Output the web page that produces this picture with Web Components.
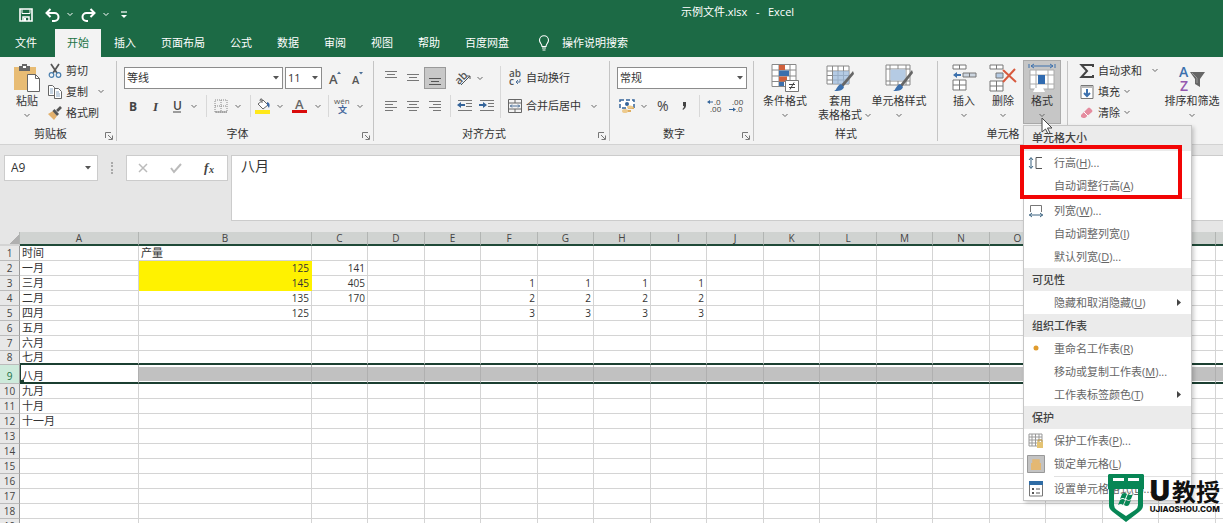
<!DOCTYPE html>
<html lang="zh-CN">
<head>
<meta charset="utf-8">
<title>示例文件.xlsx - Excel</title>
<style>
html, body { margin: 0; height: 100%; }
body { overflow: hidden; font: 11px/14px "Open Sans", "Noto Sans CJK SC", sans-serif; color: #333; background: #e6e6e6; }
</style>
</head>
<body>
<excel-app></excel-app>
<script>
const ICONS = {
  save: [14, 14, '<path d="M1 1h12v12H1z" fill="none" stroke="#fff" stroke-width="1.6"/><path d="M3 1.500v4h8v-4" fill="none" stroke="#fff"/><path d="M4 13V9h6v4" fill="none" stroke="#fff" stroke-width="1.500"/><path d="M5 10h2v3H5z" fill="#fff"/>'],
  undo: [16, 14, '<path d="M5.500 1L1.500 5l4 4M2 5h7.500a4 4 0 0 1 0 8H7" fill="none" stroke="#fff" stroke-width="2"/>'],
  redo: [16, 14, '<path d="M10.500 1l4 4-4 4M14 5H6.500a4 4 0 0 0 0 8H8" fill="none" stroke="#fff" stroke-width="2"/>'],
  chevw: [6, 5, '<path d="M.5 1L3 3.500 5.500 1" fill="none" stroke="#fff"/>'],
  custom: [6, 8, '<path d="M0 1h6" stroke="#fff" stroke-width="1.200"/><path d="M0 4h6L3 7z" fill="#fff"/>'],
  bulb: [12, 16, '<path d="M4 11.500C4 9 1.500 8 1.500 5.300a4.500 4.500 0 0 1 9 0C10.500 8 8 9 8 11.500zM4 13h4M4.500 15h3" fill="none" stroke="#fff" stroke-width="1.100"/>'],
  chev: [6, 5, '<path d="M.5 1L3 3.500 5.500 1" fill="none" stroke="#666"/>'],
  tri: [6, 4, '<path d="M0 0h6L3 3.500z" fill="#555"/>'],
  launch: [8, 8, '<path d="M.5 6V.5H6M3 3l4 4M7.500 3.500v4h-4" fill="none" stroke="#777"/>'],
  paste: [28, 28, '<path d="M1 3h22v23H1z" fill="#e8bc74"/><path d="M6 2h11v5H6z" fill="#666"/><path d="M9 0h5v4H9z" fill="#666"/><path d="M10 2h3v2h-3z" fill="#fff"/><path d="M14.500 10.500h8l4 4v13h-12z" fill="#fff" stroke="#666"/><path d="M22.500 10.500v4h4" fill="none" stroke="#666"/>'],
  cut: [14, 14, '<path d="M3 0l6 9M11 0L5 9" stroke="#555" stroke-width="1.700"/><circle cx="3.500" cy="11" r="2.300" fill="none" stroke="#4a7fae" stroke-width="1.200"/><circle cx="10.500" cy="11" r="2.300" fill="none" stroke="#4a7fae" stroke-width="1.200"/>'],
  copy: [14, 14, '<path d="M.5.5h4l2 2v8h-6z" fill="#fff" stroke="#666"/><path d="M6.500 3.500h4l3 3v7h-7z" fill="#fff" stroke="#666"/><path d="M2 4h3M2 6h3M2 8h3M8 7h3M8 9h4M8 11h4" stroke="#6f92b5" stroke-width=".8"/>'],
  brush: [14, 14, '<path d="M0 8l5-3 4 5-3 4z" fill="#e3b16d"/><path d="M4.500 5l2-2L11 8l-2 2z" fill="#555"/><path d="M9 5l4-4" stroke="#555" stroke-width="2.600"/>'],
  bold: [12, 12, '<text x="2" y="11" font-size="12" font-weight="700" fill="#444">B</text>'],
  italic: [12, 12, '<text x="4" y="11" font-size="13" font-weight="600" font-style="italic" font-family="Liberation Serif" fill="#444">I</text>'],
  under: [12, 14, '<text x="2" y="11" font-size="12" font-weight="600" fill="#444">U</text><path d="M2 13h8" stroke="#444"/>'],
  grow: [14, 14, '<text x="1" y="13" font-size="13" font-weight="600" fill="#555">A</text><path d="M9 3h4l-2-2.500z" fill="#4a6f98"/>'],
  shrink: [14, 14, '<text x="1" y="13" font-size="11" font-weight="600" fill="#555">A</text><path d="M8 1h4l-2 2.500z" fill="#4a6f98"/>'],
  border: [14, 14, '<path d="M1 1h12v12H1zM7 1v12M1 7h12" fill="none" stroke="#888" stroke-dasharray="1 1"/><path d="M1 13h12" stroke="#888"/>'],
  fill: [16, 16, '<path d="M0 12h15v4H0z" fill="#ffe81a"/><path d="M3 6l5-4 5 5-5 4z" fill="#fff" stroke="#666"/><path d="M7 5V1q-2-1-2 2" fill="none" stroke="#666"/><path d="M12 4q4 1 2 6l-2-3z" fill="#3c68a5"/>'],
  color: [16, 16, '<text x="3" y="11" font-size="13" font-weight="600" fill="#666">A</text><path d="M0 12h15v3H0z" fill="#d90b0b"/>'],
  wen: [16, 16, '<text x="0" y="6" font-size="8" fill="#555">wén</text><text x="4" y="15" font-size="9" font-weight="700" fill="#44669b">文</text>'],
  vtop: [14, 14, '<path d="M1 .5h12M3 3.500h8M1 6.500h12" stroke="#777"/>'],
  vmid: [14, 14, '<path d="M1 3.500h12M3 6.500h8M1 9.500h12" stroke="#777"/>'],
  vbot: [14, 14, '<path d="M1 7.500h12M3 10.500h8M1 13.500h12" stroke="#555"/>'],
  left: [14, 14, '<path d="M1 2.500h12M1 5.500h8M1 8.500h12M1 11.500h8" stroke="#777"/>'],
  center: [14, 14, '<path d="M1 2.500h12M3 5.500h8M1 8.500h12M3 11.500h8" stroke="#777"/>'],
  right: [14, 14, '<path d="M1 2.500h12M5 5.500h8M1 8.500h12M5 11.500h8" stroke="#777"/>'],
  orient: [16, 16, '<text x="0" y="12" font-size="11" font-weight="600" fill="#555" transform="rotate(-45 6 9)">ab</text><path d="M6 15L15 6M12 6h3v3" fill="none" stroke="#555"/>'],
  outdent: [16, 14, '<path d="M1 1.500h14M9 4.500h6M9 7.500h6M1 11.500h14" stroke="#777"/><path d="M0 6l4-3v2h4v2H4v2z" fill="#34649a"/>'],
  indent: [16, 14, '<path d="M1 1.500h14M9 4.500h6M9 7.500h6M1 11.500h14" stroke="#777"/><path d="M8 6L4 3v2H0v2h4v2z" fill="#34649a"/>'],
  wrap: [14, 16, '<text x="1" y="7" font-size="10" font-weight="600" fill="#555">ab</text><text x="1" y="15" font-size="10" font-weight="600" fill="#555">c</text><path d="M12 9v3H8M10 10l-2 2 2 2" fill="none" stroke="#4a6f98"/>'],
  merge: [14, 14, '<path d="M.5.5h13v13H.5zM.5 4h13M.5 10h13M7 .5V4M7 10v3.500" fill="none" stroke="#666"/><path d="M2 7h10M4 5.500L2.500 7 4 8.500M10 5.500L11.500 7 10 8.500" fill="none" stroke="#4a6f98"/>'],
  money: [16, 16, '<path d="M1 2h14v8H1z" fill="#fff" stroke="#34649a" stroke-width="1.500" stroke-dasharray="4 2"/><circle cx="8" cy="6" r="2" fill="#34649a"/><path d="M9 9h6v2H9zM6 12h6v2H6z" fill="#dfae62"/><ellipse cx="11" cy="9" rx="3" ry="1.500" fill="#edca8d"/><ellipse cx="6" cy="13" rx="3" ry="2" fill="#edca8d"/>'],
  percent: [14, 14, '<text x="1" y="12" font-size="14" fill="#444">%</text>'],
  comma: [8, 14, '<path d="M3 3h3v4q0 2-3 4l-.5-1Q4 9 4 7H3z" fill="#444"/>'],
  incdec: [14, 14, '<text x="7" y="6" font-size="8" fill="#444">.0</text><text x="3" y="13" font-size="8" fill="#444">.00</text><path d="M0 3l3-2v1.500h3v1H3V5z" fill="#34649a"/>'],
  decdec: [14, 14, '<text x="3" y="6" font-size="8" fill="#444">.00</text><text x="7" y="13" font-size="8" fill="#444">.0</text><path d="M7 10.500L4 8.500V10H0v1h4v1.500z" fill="#34649a"/>'],
  cond: [28, 28, '<path d="M1 .5h24v22H1zM1 6h24M1 12h24M1 17.500h24M8 .5v22M19 .5v22" fill="#fff" stroke="#888"/><path d="M8 1h6v5H8zM8 12.500h8v5H8z" fill="#d0603c"/><path d="M8 6.500h10V12H8zM8 18h5v4H8z" fill="#3c70ad"/><path d="M14.500 16.500h13v11h-13z" fill="#fff" stroke="#777"/><path d="M18 20.500h6M18 23.500h6M23 18.500l-4 7" stroke="#444"/>'],
  tblfmt: [28, 28, '<path d="M1 2h22v18H1zM1 7h22M1 11.500h22M1 16h22M6.500 2v18M12 2v18M17.500 2v18" fill="#fff" stroke="#888"/><path d="M7 7h16v13H7z" fill="#9cbadb" opacity=".75"/><path d="M27 7L15 21l2 2L28 10z" fill="#666"/><path d="M15 20l3 3c-1 4-6 4-10 4 3-1 3-6 7-7z" fill="#3c70ad"/>'],
  cellfmt: [28, 28, '<path d="M1 1h24v20H1zM1 5h24M1 17h24M5 1v20M21 1v20M13 1v4M13 17v4" fill="#fff" stroke="#888"/><path d="M5.500 5.500h15v11h-15z" fill="#b5cbe4"/><path d="M27 6L15 21l2 2L28 9z" fill="#666"/><path d="M15 20l3 3c-1 4-6 4-10 4 3-1 3-6 7-7z" fill="#3c70ad"/>'],
  insert: [28, 28, '<path d="M3 1h13v4H3zM9.500 1v4M3 16h13v10H3zM3 21h13M9.500 16v10" fill="#fff" stroke="#777"/><path d="M13 9h13v4H13z" fill="#ccd5df" stroke="#777"/><path d="M19.500 9v4" stroke="#777"/><path d="M3 11l4-3v2h4v2H7v2z" fill="#3c70ad"/>'],
  del: [28, 28, '<path d="M1 1h13v4H1zM7.500 1v4M1 17h13v10H1zM1 22h13M7.500 17v10" fill="#fff" stroke="#777"/><path d="M7 9h7v5H7z" fill="#b5cbe4" stroke="#777"/><path d="M14 6l13 12M26 5L14 18" stroke="#d85a3e" stroke-width="2"/>'],
  format: [28, 28, '<path d="M3 2h22M6 0L3 2l3 2M22 0l3 2-3 2M1 0v4M27 0v4" fill="none" stroke="#3c70ad"/><path d="M2 6h24v19H2zM2 11h24M2 20h24M8 6v19M20 6v19" fill="#fff" stroke="#aaa"/><path d="M10 11h7v9h-7z" fill="#316bb0"/><path d="M5 28l2-4 8 0 2 4" fill="#fff"/>'],
  sum: [14, 14, '<path d="M13 3V1H1.500L7 7l-5.500 6H13v-2" fill="none" stroke="#444" stroke-width="2"/>'],
  down: [14, 14, '<path d="M1 .5h12v13H1z" fill="#fff" stroke="#777"/><path d="M1 1h12v2H1z" fill="#bbb"/><path d="M7 4v7M4 8l3 3 3-3" fill="none" stroke="#3c70ad" stroke-width="2"/>'],
  erase: [14, 14, '<path d="M1 9l7-7q1-1 2 0l2 2q1 1 0 2l-7 6H3L1 11z" fill="#e58c9f"/><path d="M4 6l4 4" stroke="#fff"/>'],
  sort: [28, 28, '<text x="1" y="13" font-size="14" font-weight="600" fill="#3c70ad">A</text><text x="2" y="27" font-size="14" font-weight="600" fill="#9458ae">Z</text><path d="M12 8h15l-5 7v8l-5-3v-5z" fill="#666"/><path d="M14 9l5 5v5" fill="none" stroke="#999"/>'],
  x: [12, 12, '<path d="M2 2l8 8M10 2l-8 8" stroke="#bbb" stroke-width="1.500"/>'],
  check: [14, 12, '<path d="M2 6l3 4 7-8" fill="none" stroke="#bbb" stroke-width="2"/>'],
  fx: [14, 14, '<text x="1" y="11" font-family="Liberation Serif" font-style="italic" font-weight="700" font-size="13" fill="#444">f</text><text x="6" y="12" font-family="Liberation Serif" font-style="italic" font-weight="700" font-size="10" fill="#444">x</text>'],
  rowh: [16, 14, '<path d="M3 2v10M1 4l2-2.500L5 4M1 10l2 2.500L5 10" fill="none" stroke="#3b6380"/><path d="M14 1.500H8v11h6" fill="none" stroke="#555"/>'],
  colw: [16, 14, '<path d="M2.500 8V1.500h11V8" fill="none" stroke="#777"/><path d="M1 11h14M4 9l-2.500 2L4 13M12 9l2.500 2-2.500 2" fill="none" stroke="#3b6380"/>'],
  dot: [16, 14, '<circle cx="8" cy="6" r="2.500" fill="#e09b2d"/>'],
  protect: [16, 16, '<path d="M1 1h13v12H1zM1 4h13M1 7h13M1 10h13M4 1v12M7.500 1v12M11 1v12" fill="#fff" stroke="#999"/><path d="M9 9h6v6H9z" fill="#e4c373"/><path d="M10 9V7h4v2" fill="none" stroke="#c8a049"/>'],
  lock: [18, 18, '<path d="M.5.5h17v17H.5z" fill="#c3c3c3" stroke="#999"/><path d="M4 8h10v7H4z" fill="#e4b873"/><path d="M6 8V5h6v3" fill="#e4b873" stroke="#e4b873" stroke-width="1.500"/>'],
  dialog: [14, 16, '<path d="M.5 1h13v14H.5z" fill="#fff" stroke="#777"/><path d="M0 0h14v4H0z" fill="#2f6ca5"/><path d="M3 7h2v2H3zM3 11h2v2H3z" fill="#555"/><path d="M7 8h4M7 12h4" stroke="#555"/>'],
  sub: [5, 7, '<path d="M0 0l4 3.500L0 7z" fill="#444"/>'],
  cursor: [12, 18, '<path d="M1 1v14l3.500-3 2.500 5 2-1-2.500-5H11z" fill="#fff" stroke="#444"/>'],
  shield: [36, 48, '<path fill-rule="evenodd" d="M1 0h34l1 1v14h-1v17q0 3-4 6L18 48 5 38q-4-3-4-6V15H0V1zM6 15v16q0 3 3 5l9 6 9-6q3-2 3-5V15z" fill="#078655"/><path d="M5 4h11v3H5zM20 4h11v3H20z" fill="#fff"/><path d="M14 20q3-2 5 0l-2 5q-2-2-5 0zM20 20q3 2 5 0l-2 5q-2 2-5 0zM12 26q3-2 5 0l-2 5q-2-2-5 0zM18 26q3 2 5 0l-2 5q-2 2-5 0z" fill="#078655"/>']
};

const define = (name, html, setup) => {
  const template = document.createElement('template');
  template.innerHTML = html;
  customElements.define(name, class extends HTMLElement {
    constructor() {
      super();
      this.attachShadow({ mode: 'open' }).append(template.content.cloneNode(true));
    }
    connectedCallback() { if (setup) setup(this, this.shadowRoot); }
  });
};

define('ui-icon', `<style>:host{display:inline-flex;flex:none}svg{display:block;overflow:visible}</style>`, (el, root) => {
  const [w, h, body] = ICONS[el.getAttribute('name')];
  root.innerHTML += `<svg width="${w}" height="${h}" viewBox="0 0 ${w} ${h}" aria-hidden="true">${body}</svg>`;
});

/* Button with an icon only. */
define('tool-button', `<style>
:host{display:block;flex:none;height:22px}
button{all:unset;box-sizing:border-box;display:flex;width:100%;height:100%;align-items:center;justify-content:center}
:host([active]) button{background:#c8c8c8;border:1px solid #999}
</style><button type="button"></button>`, (el, root) => {
  const b = root.querySelector('button');
  b.setAttribute('aria-label', el.title || el.getAttribute('icon'));
  b.innerHTML = `<ui-icon name="${el.getAttribute('icon')}"></ui-icon>`;
});

/* One-line button with an icon, a label and an optional arrow. */
define('label-button', `<style>
:host{display:block;height:21px}
button{all:unset;display:flex;height:100%;align-items:center;gap:4px;white-space:nowrap}
.ic{display:flex;width:14px;justify-content:center}
.arrow{display:none}
:host([drop]) .arrow{display:block}
:host([drop=far]) .arrow{margin-left:6px}
</style><button type="button"><span class="ic"></span><slot></slot><ui-icon class="arrow" name="chev"></ui-icon></button>`, (el, root) => {
  root.querySelector('.ic').innerHTML = `<ui-icon name="${el.getAttribute('icon')}"></ui-icon>`;
});

/* Tall button: picture on top, label under it. */
define('large-button', `<style>
:host{display:block;flex:none;height:64px}
button{all:unset;box-sizing:border-box;display:flex;flex-direction:column;align-items:center;width:100%;height:100%;padding-top:4px;white-space:nowrap;text-align:center}
.ic{height:30px}
.arrow{display:flex;height:14px;align-items:center}
:host([inline-arrow]) .arrow{display:none}
:host([active]) button{background:#c6c6c6;outline:1px solid #aaa;outline-offset:-1px}
</style><button type="button"><span class="ic"></span><span><slot></slot></span><span class="arrow"><ui-icon name="chev"></ui-icon></span></button>`, (el, root) => {
  root.querySelector('.ic').innerHTML = `<ui-icon name="${el.getAttribute('icon')}"></ui-icon>`;
});

define('combo-box', `<style>
:host{display:block;position:relative;height:22px}
select{appearance:none;box-sizing:border-box;width:100%;height:100%;margin:0;padding:0 2px;border:1px solid #8c8c8c;border-radius:0;background:#fff;color:#333;font:inherit}
ui-icon{position:absolute;right:4px;top:9px;pointer-events:none}
</style><select></select><ui-icon name="tri"></ui-icon>`, (el, root) => {
  const s = root.querySelector('select');
  s.setAttribute('aria-label', el.title);
  s.innerHTML = `<option>${el.getAttribute('value')}</option>`;
});

define('ribbon-group', `<style>
:host{display:grid;grid-template-rows:64px 20px;box-sizing:border-box;flex:none;padding-top:3px;position:relative;background:linear-gradient(#c4c4c4,#c4c4c4) right 4px/1px 80px no-repeat}
:host([last]){flex:1;background:none}
.body{display:flex;min-width:0}
.foot{display:grid;grid-template-columns:1fr;align-items:center;text-align:center}
:host([launcher]) .foot{grid-template-columns:1fr 16px}
button{all:unset;display:none;justify-self:center;margin-top:4px}
:host([launcher]) button{display:block}
</style><div class="body"><slot></slot></div><div class="foot"><span class="name"></span><button type="button" aria-label="更多"><ui-icon name="launch"></ui-icon></button></div>`, (el, root) => {
  root.querySelector('.name').textContent = el.getAttribute('label') || '';
});

define('title-bar', `<style>
:host{display:flex;height:29px;color:#fff}
.quick{display:flex;align-items:center;box-sizing:border-box;width:252px;padding-left:16px}
h1{flex:1;margin:0;padding-top:5px;font:inherit;text-align:center;white-space:pre}
</style><div class="quick">
<tool-button icon="save" title="保存" style="width:20px"></tool-button><tool-button icon="undo" title="撤销" style="width:34px"></tool-button><tool-button icon="chevw" title="撤销列表" style="width:0"></tool-button><tool-button icon="redo" title="恢复" style="width:36px"></tool-button><tool-button icon="chevw" title="恢复列表" style="width:0"></tool-button><tool-button icon="custom" title="自定义" style="width:36px"></tool-button>
</div><h1>示例文件.xlsx   -   Excel</h1>`);

define('ribbon-tabs', `<style>
:host{display:block}
nav{display:flex;height:28px;gap:1px;padding-left:3px}
a{display:flex;align-items:center;padding:0 12px;color:#fff;text-decoration:none;white-space:nowrap}
a:first-child{margin-right:5px}
a[aria-current]{background:#f3f3f3;color:#217346}
.tell{gap:12px;padding:0 16px}
</style><nav>
<a href="#file">文件</a><a href="#home" aria-current="page">开始</a><a href="#insert">插入</a><a href="#layout">页面布局</a><a href="#formula">公式</a><a href="#data">数据</a><a href="#review">审阅</a><a href="#view">视图</a><a href="#help">帮助</a><a href="#pan">百度网盘</a><a href="#tell" class="tell"><ui-icon name="bulb"></ui-icon>操作说明搜索</a></nav>`);

define('menu-item', `<style>
:host{display:block}
button{all:unset;box-sizing:border-box;display:grid;grid-template-columns:24px 1fr 14px;align-items:center;width:100%;height:23px;color:#666;white-space:nowrap}
.label{padding-left:6px}
.ic{display:flex;justify-content:center}
.arrow{visibility:hidden}
:host([submenu]) .arrow{visibility:visible}
</style><button type="button" role="menuitem"><span class="ic"></span><span class="label"><slot></slot></span><ui-icon class="arrow" name="sub"></ui-icon></button>`, (el, root) => {
  const name = el.getAttribute('icon');
  if (name) root.querySelector('.ic').innerHTML = `<ui-icon name="${name}"></ui-icon>`;
});

define('format-menu', `<style>
:host{display:block;box-sizing:border-box;width:169px;border:1px solid #c6c6c6;background:#fff;box-shadow:2px 2px 4px #0003}
h2{margin:0;padding-left:8px;background:#ebebeb;font:inherit;font-weight:500;line-height:23px;color:#444}
h2:first-child{padding-bottom:2px}
hr{margin:0 0 0 30px;height:1px;border:0;border-bottom:1px solid #e1e1e1}
.highlight{position:absolute;left:-4px;top:19px;width:154px;height:46px;border:4px solid #f20505;pointer-events:none}
</style><div role="menu" aria-label="格式">
<h2>单元格大小</h2>
<menu-item icon="rowh">行高(<u>H</u>)...</menu-item>
<menu-item>自动调整行高(<u>A</u>)</menu-item>
<hr>
<menu-item icon="colw">列宽(<u>W</u>)...</menu-item>
<menu-item>自动调整列宽(<u>I</u>)</menu-item>
<menu-item>默认列宽(<u>D</u>)...</menu-item>
<h2>可见性</h2>
<menu-item submenu>隐藏和取消隐藏(<u>U</u>)</menu-item>
<h2>组织工作表</h2>
<menu-item icon="dot">重命名工作表(<u>R</u>)</menu-item>
<menu-item>移动或复制工作表(<u>M</u>)...</menu-item>
<menu-item submenu>工作表标签颜色(<u>T</u>)</menu-item>
<h2>保护</h2>
<menu-item icon="protect">保护工作表(<u>P</u>)...</menu-item>
<menu-item icon="lock">锁定单元格(<u>L</u>)</menu-item>
<hr>
<menu-item icon="dialog">设置单元格格式(<u>E</u>)...</menu-item>
</div><div class="highlight"></div>`);

define('excel-ribbon', `<style>
:host{display:flex;position:relative;z-index:5;height:87px;background:#f3f3f3;border-bottom:1px solid #d2d2d2}
.rows{display:flex;flex-direction:column;gap:6px;padding-top:7px}
.row{display:flex;align-items:center;height:22px}
.stack{display:flex;flex-direction:column}
.sep{flex:none;width:12px;height:22px;background:linear-gradient(#d8d8d8,#d8d8d8) center/1px 100% no-repeat}
.thin{width:8px}
.tall{flex:none;width:1px;height:52px;margin-top:6px;background:#d8d8d8}
.anchor{position:relative}
.anchor format-menu{position:absolute;left:0;top:65px}
.pointer{position:absolute;left:18px;top:57px;z-index:2}
.two{display:inline-grid;grid-template-columns:1fr;position:relative}
.two ui-icon{position:absolute;left:100%;bottom:4px;margin-left:3px}
</style>
<ribbon-group label="剪贴板" launcher style="width:117px">
  <large-button icon="paste" style="width:28px;margin-left:13px">粘贴</large-button>
  <div class="stack" style="padding-left:7px"><label-button icon="cut">剪切</label-button><label-button icon="copy" drop="far">复制</label-button><label-button icon="brush">格式刷</label-button></div>
</ribbon-group>
<ribbon-group label="字体" launcher style="width:257px"><div class="rows" style="padding-left:5px">
  <div class="row" style="padding-left:2px"><combo-box title="字体" value="等线" style="width:159px"></combo-box><combo-box title="字号" value="11" style="width:37px;margin-left:2px"></combo-box><tool-button icon="grow" title="增大字号" style="width:26px"></tool-button><tool-button icon="shrink" title="减小字号" style="width:20px"></tool-button></div>
  <div class="row"><tool-button icon="bold" title="加粗" style="width:22px"></tool-button><tool-button icon="italic" title="倾斜" style="width:22px"></tool-button><tool-button icon="under" title="下划线" style="width:22px"></tool-button><tool-button icon="chev" style="width:12px"></tool-button><i class="sep"></i><tool-button icon="border" title="边框" style="width:18px"></tool-button><tool-button icon="chev" style="width:16px"></tool-button><i class="sep thin"></i><tool-button icon="fill" title="填充颜色" style="width:18px"></tool-button><tool-button icon="chev" style="width:16px"></tool-button><tool-button icon="color" title="字体颜色" style="width:24px"></tool-button><tool-button icon="chev" style="width:12px"></tool-button><i class="sep thin"></i><tool-button icon="wen" title="拼音" style="width:20px"></tool-button><tool-button icon="chev" style="width:16px"></tool-button></div>
</div></ribbon-group>
<ribbon-group label="对齐方式" launcher style="width:236px">
  <div class="rows" style="width:126px;padding-left:6px;box-sizing:border-box">
    <div class="row"><tool-button icon="vtop" title="顶端对齐" style="width:22px"></tool-button><tool-button icon="vmid" title="垂直居中" style="width:22px"></tool-button><tool-button icon="vbot" title="底端对齐" active style="width:22px"></tool-button><tool-button icon="orient" title="方向" style="width:34px"></tool-button><tool-button icon="chev" style="width:0"></tool-button></div>
    <div class="row"><tool-button icon="left" title="左对齐" style="width:22px"></tool-button><tool-button icon="center" title="居中" style="width:22px"></tool-button><tool-button icon="right" title="右对齐" style="width:22px"></tool-button><i class="sep thin"></i><tool-button icon="outdent" title="减少缩进" style="width:22px"></tool-button><tool-button icon="indent" title="增加缩进" style="width:22px"></tool-button></div>
  </div><i class="tall"></i>
  <div class="rows" style="padding-left:7px"><label-button class="row" icon="wrap">自动换行</label-button><label-button class="row" icon="merge" drop="far">合并后居中</label-button></div>
</ribbon-group>
<ribbon-group label="数字" launcher style="width:144px"><div class="rows" style="padding-left:7px">
  <combo-box title="数字格式" value="常规" style="width:130px"></combo-box>
  <div class="row"><tool-button icon="money" title="会计格式" style="width:20px"></tool-button><tool-button icon="chev" style="width:14px"></tool-button><tool-button icon="percent" title="百分比" style="width:24px"></tool-button><tool-button icon="comma" title="千位分隔" style="width:18px"></tool-button><i class="sep"></i><tool-button icon="incdec" title="增加小数位" style="width:18px"></tool-button><tool-button icon="decdec" title="减少小数位" style="width:26px"></tool-button></div>
</div></ribbon-group>
<ribbon-group label="样式" style="width:184px">
  <large-button icon="cond" style="width:56px;margin-left:3px">条件格式</large-button><large-button icon="tblfmt" inline-arrow style="width:54px"><span class="two">套用<br>表格格式<ui-icon name="chev"></ui-icon></span></large-button><large-button icon="cellfmt" style="width:64px">单元格样式</large-button>
</ribbon-group>
<ribbon-group label="单元格" style="width:130px">
  <large-button icon="insert" style="width:38px;margin-left:7px">插入</large-button><large-button icon="del" style="width:40px">删除</large-button>
  <div class="anchor"><large-button icon="format" active style="width:38px">格式</large-button><format-menu></format-menu><ui-icon class="pointer" name="cursor"></ui-icon></div>
</ribbon-group>
<ribbon-group last>
  <div class="stack" style="padding-left:12px;width:82px"><label-button icon="sum" drop="far">自动求和</label-button><label-button icon="down" drop>填充</label-button><label-button icon="erase" drop>清除</label-button></div>
  <large-button icon="sort" style="width:60px">排序和筛选</large-button>
</ribbon-group>`);

define('formula-bar', `<style>
:host{display:flex;align-items:flex-start;height:66px;padding:10px 0 11px 4px}
.box{box-sizing:border-box;display:flex;align-items:center;height:26px;background:#fff;border:1px solid #ccc}
.name{width:94px;padding:0 6px}
input{all:unset;flex:1;min-width:0;font-size:12px}
.grip{width:28px;height:26px;display:flex;align-items:center;justify-content:center}
.grip::before{content:"";height:12px;border-left:2px dotted #aaa}
.tools{width:102px;justify-content:space-around}
textarea{box-sizing:border-box;flex:1;height:66px;margin:0 0 0 3px;padding:0 9px;border:1px solid #ccc;border-right:0;border-radius:0;background:#fff;color:#333;font:inherit;font-size:14px;line-height:20px;resize:none;outline:0}
</style><div class="box name"><input aria-label="名称框" value="A9"><ui-icon name="tri"></ui-icon></div><div class="grip"></div>
<div class="box tools"><tool-button icon="x" title="取消"></tool-button><tool-button icon="check" title="输入"></tool-button><tool-button icon="fx" title="插入函数"></tool-button></div>
<textarea aria-label="编辑栏">八月</textarea>`);

define('sheet-grid', `<style>
:host{display:block;flex:1;min-height:0;overflow:hidden;background:#fff}
table{table-layout:fixed;width:0;border-collapse:separate;border-spacing:0}
th,td{box-sizing:border-box;height:15px;padding:0 2px;border-right:1px solid #d4d4d4;border-bottom:1px solid #d4d4d4;line-height:14px;vertical-align:bottom;white-space:nowrap}
th{font-weight:400;text-align:center;color:#444}
thead th{height:14px;line-height:12px;background:#d0d3d1;border-right-color:#b2b5b3;border-bottom:2px solid #1f4a38}
thead th:first-child{background:linear-gradient(135deg,#e6e6e6 70%,#b0b0b0 70%);border-bottom-color:#d4d4d4}
tbody th{background:#e8e8e8;border-right-color:#999;border-bottom-color:#bbb;padding:0}
.num{text-align:right}
.num,th{font-size:10px}
.yellow{background:#fff200;border-color:#fff200}
.before td{height:14px;border-bottom:2px solid #1b3f31;line-height:12px}
.before th{height:14px;line-height:13px}
.sel td{height:19px;line-height:13px;border-bottom:2px solid #1b3f31;background:#c1c1c1;border-right-color:#b0b0b0;box-shadow:inset 0 2px #fff,inset 0 -1px #fff}
.sel th{height:19px;background:#cdeadb;color:#217346}
.sel td:nth-child(2){position:relative;background:#fff;border-left:1px solid #1b3f31;padding-left:1px}
.sel td:nth-child(2)::after{content:"";position:absolute;left:0;bottom:0;width:3px;height:2px;background:#1b3f31}
</style><table></table>`, (el, root) => {
  const widths = [20, 119, 173, ...Array.from({ length: 17 }, (_, i) => i % 2 ? 57 : 56)];
  const letters = [...'ABCDEFGHIJKLMNO', '', '', '', ''];
  const data = {
    1: { A: '时间', B: '产量' }, 2: { A: '一月', B: 125, C: 141 },
    3: { A: '三月', B: 145, C: 405, F: 1, G: 1, H: 1, I: 1 },
    4: { A: '二月', B: 135, C: 170, F: 2, G: 2, H: 2, I: 2 },
    5: { A: '四月', B: 125, F: 3, G: 3, H: 3, I: 3 },
    6: { A: '五月' }, 7: { A: '六月' }, 8: { A: '七月' }, 9: { A: '八月' },
    10: { A: '九月' }, 11: { A: '十月' }, 12: { A: '十一月' }
  };
  const cell = (r, c) => {
    const v = data[r]?.[c] ?? '';
    const cls = [typeof v === 'number' && 'num', c === 'B' && (r === 2 || r === 3) && 'yellow'].filter(Boolean).join(' ');
    return `<td class="${cls}">${v}</td>`;
  };
  let rows = '';
  for (let r = 1; r <= 19; r++)
    rows += `<tr class="${r === 9 ? 'sel' : r === 8 ? 'before' : ''}"><th scope="row">${r}</th>${letters.map(c => cell(r, c)).join('')}</tr>`;
  root.querySelector('table').innerHTML =
    `<colgroup>${widths.map(w => `<col style="width:${w}px">`).join('')}</colgroup><thead><tr><th></th>${letters.map(c => `<th scope="col">${c}</th>`).join('')}</tr></thead><tbody>${rows}</tbody>`;
});

define('site-mark', `<style>
:host{display:flex;gap:6px;align-items:flex-start;color:#111}
.text{padding-top:4px}
.big{display:flex;align-items:center;gap:2px;height:26px;font:700 24px/26px "Noto Sans CJK SC",sans-serif}
.big b{font:900 28px/26px Inter,sans-serif}
.url{font:800 8px/10px Inter,sans-serif}
</style><ui-icon name="shield"></ui-icon><div class="text"><div class="big"><b>U</b><span>教授</span></div><div class="url">UJIAOSHOU.COM</div></div>`);

define('excel-app', `<style>
:host{display:flex;flex-direction:column;height:100vh;position:relative;overflow:hidden}
header{background:#1c6a45}
site-mark{position:absolute;right:3px;bottom:1px;z-index:10}
</style><header><title-bar></title-bar><ribbon-tabs></ribbon-tabs></header><excel-ribbon></excel-ribbon><formula-bar></formula-bar><sheet-grid></sheet-grid><site-mark></site-mark>`);
</script>
</body>
</html>
